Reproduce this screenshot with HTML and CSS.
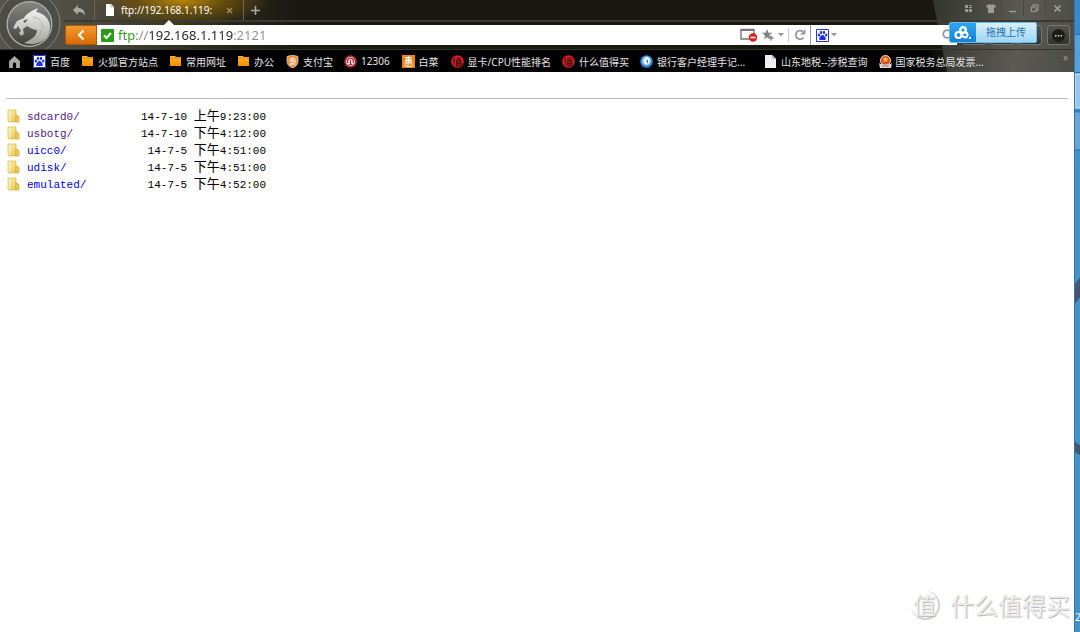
FILE: index.html
```html
<!DOCTYPE html>
<html lang="zh-CN">
<head>
<meta charset="utf-8">
<title>ftp://192.168.1.119:2121</title>
<link rel="stylesheet" href="styles.css">
</head>
<body>
<svg class="defs" width="0" height="0" aria-hidden="true">
  <defs>
    <linearGradient id="gFolder" x1="0" y1="0" x2="0" y2="1"><stop offset="0" stop-color="#ffb52e"/><stop offset="1" stop-color="#f28c00"/></linearGradient>
    <linearGradient id="gDir" x1="0" y1="0" x2="1" y2="1"><stop offset="0" stop-color="#fdf3b4"/><stop offset="1" stop-color="#e9c54e"/></linearGradient>
    <linearGradient id="gDisc" x1="0" y1="0" x2="0" y2="1"><stop offset="0" stop-color="#858581"/><stop offset=".5" stop-color="#62625e"/><stop offset="1" stop-color="#40403d"/></linearGradient>
    <linearGradient id="gHorse" x1="0" y1="0" x2="0" y2="1"><stop offset="0" stop-color="#f4f4f4"/><stop offset="1" stop-color="#a3a3a0"/></linearGradient>
    <symbol id="folder" viewBox="0 0 13 13"><path d="M1 1h5l1 1h5v9H1z" fill="url(#gFolder)"/><path d="M1 3h11" stroke="#b86e00" stroke-width=".6"/></symbol>
    <symbol id="paw" viewBox="0 0 13 13"><rect width="13" height="13" fill="#fff"/><path d="M.5.5h12v12H.5z" fill="none" stroke="#2a35e0"/><g fill="#2230dd"><ellipse cx="2.9" cy="6" rx="1.2" ry="1.6"/><ellipse cx="5" cy="3.4" rx="1.2" ry="1.6"/><ellipse cx="8" cy="3.4" rx="1.2" ry="1.6"/><ellipse cx="10.2" cy="6" rx="1.2" ry="1.6"/><path d="M6.500 5.800c1.300 0 1.700 1.300 2.600 2.100 1.300 1.200 1 3.200-.6 3.200-.8 0-1.200-.2-2-.2s-1.200.2-2 .2c-1.600 0-1.900-2-.6-3.200.9-.8 1.300-2.100 2.600-2.100z"/></g></symbol>
    <symbol id="smzdm" viewBox="0 0 13 13"><circle cx="6.500" cy="6.500" r="6.300" fill="#cf2029"/><path d="M4 2.500L2.300 6M3.300 5v5.500M5 3.800h5.500M7.800 2v2.500M5.500 5.500h4.500v4.500H5.500zM5.500 7h4.500M5.500 8.500h4.500M4.800 11h6" stroke="#43090c" stroke-width=".9" fill="none"/></symbol>
    <symbol id="dir" viewBox="0 0 13 14"><path d="M1 1h8v12H2l-1-1z" fill="url(#gDir)" stroke="#d9b84c" stroke-width=".7"/><path d="M9 6l3 1.500V13H9z" fill="#f1cf5d" stroke="#c9a238" stroke-width=".7"/><path d="M2.500 2v10" stroke="#fffbe0"/></symbol>
  </defs>
</svg>
<div class="screen">
  <div class="browser">
    <header class="chrome">
      <div class="top">
        <svg class="logo" viewBox="0 0 64 49" aria-label="浏览器菜单" role="img">
          <circle cx="29" cy="23" r="31" fill="#4d4c45" stroke="#85847b" stroke-width="1"/>
          <circle cx="29.500" cy="24" r="22.300" fill="url(#gDisc)" stroke="#b0b0ab" stroke-width="1.300"/>
          <path d="M14 26l3-5 7-3c2-4 7-7 14-10l-2 4c8 1 14 7 14 15 0 9-6 15-16 17-4 0-7 0-10-1 7-3 13-7 13-13-3 0-7-2-10-4l-4 3 1 5-3 2-2-3 2-2-3-5-2 3-3-1z" fill="url(#gHorse)"/>
          <path d="M23 21l5-2-3 4z" fill="#555552"/>
          <path d="M33 17c6 1 10 5 10 11M41 30c0 5-3 8-8 11" fill="none" stroke="#a0a09d" stroke-width=".7"/>
        </svg>
        <div class="tabs">
          <button class="undo" aria-label="恢复标签"><svg width="13" height="11" viewBox="0 0 13 11"><path d="M5 0v3c4 0 7 2 7 8-1-3-3-4-7-4v3L0 5z" fill="#aaa99f"/></svg></button>
          <div class="tab">
            <svg width="10" height="12" viewBox="0 0 10 12"><path d="M1 0h5l3 3v9H1z" fill="#fff"/><path d="M6 0v3h3" fill="none" stroke="#aaa" stroke-width=".8"/></svg>
            <span class="tab-title">ftp://192.168.1.119:</span>
            <button class="close" aria-label="关闭标签"><svg width="7" height="7" viewBox="0 0 7 7"><path d="M1 1l5 5M6 1L1 6" stroke="#a39261" stroke-width="1.400"/></svg></button>
          </div>
          <button class="new" aria-label="新标签"><svg width="9" height="9" viewBox="0 0 9 9"><path d="M4.500 0v9M0 4.500h9" stroke="#aaa99f" stroke-width="1.600"/></svg></button>
          <div class="controls">
            <button aria-label="布局"><svg width="9" height="9" viewBox="0 0 9 9"><path d="M1 1h3v3H1zM5 1h3v1H5zM5 3h3v1H5zM1 5h3v3H1zM5 5h3v3H5z" fill="#9b9b95"/></svg></button>
            <button aria-label="皮肤"><svg width="10" height="9" viewBox="0 0 10 9"><path d="M3 0c1 1 3 1 4 0l3 2-1 2-1-.5V9H2V3.500L1 4 0 2z" fill="#9b9b95"/></svg></button>
            <button aria-label="最小化"><svg width="9" height="9" viewBox="0 0 9 9"><path d="M1 7.500h7" stroke="#9b9b95" stroke-width="1.500"/></svg></button>
            <button aria-label="还原"><svg width="9" height="9" viewBox="0 0 9 9"><path d="M3 2.500V1h5v5H6.500M1.500 3h4.500v4.500H1.500z" fill="none" stroke="#9b9b95" stroke-width="1.100"/></svg></button>
            <button aria-label="关闭"><svg width="9" height="9" viewBox="0 0 9 9"><path d="M1.500 1.500l6 6M7.500 1.500l-6 6" stroke="#a5a59f" stroke-width="1.500"/></svg></button>
          </div>
        </div>
        <div class="nav">
          <button class="back" aria-label="后退"><svg width="8" height="12" viewBox="0 0 8 12"><path d="M6.500 1.500L2 6l4.500 4.500" fill="none" stroke="#fff" stroke-width="2"/></svg></button>
          <div class="address">
            <svg class="safe" width="13" height="13" viewBox="0 0 13 13"><rect width="13" height="13" rx="1" fill="#2d9a1c"/><path d="M3 6.500l2.500 2.500L10 4" fill="none" stroke="#fff" stroke-width="2"/></svg>
            <input class="url" type="text" aria-label="地址" value="ftp://192.168.1.119:2121">
            <svg width="18" height="14" viewBox="0 0 18 14"><path d="M1 1.500h13v9.500H1z" fill="#fff" stroke="#777" stroke-width="1.400"/><path d="M1 2h13" stroke="#777" stroke-width="2"/><circle cx="13" cy="9.500" r="4.200" fill="#e01b1b"/><path d="M10.500 9.500h5" stroke="#fff" stroke-width="1.600"/></svg>
            <svg width="12" height="12" viewBox="0 0 12 12"><path d="M5 0l1.400 3.800h4L7.300 6 8 8 6 9.500 5 8 2 10.500l1-4L0 3.800h3.700z" fill="#808080"/><path d="M9 6.500v5M6.500 9h5" stroke="#808080" stroke-width="1.400"/></svg>
            <svg width="6" height="4" viewBox="0 0 6 4"><path d="M0 0h6L3 3.500z" fill="#999"/></svg>
            <button class="reload" aria-label="刷新"><svg width="12" height="12" viewBox="0 0 12 12"><path d="M9.500 8.500A4.300 4.300 0 1 1 9 2.800" fill="none" stroke="#999" stroke-width="1.800"/><path d="M11.500 0v5.500H6z" fill="#999"/></svg></button>
          </div>
          <div class="search">
            <svg width="13" height="13"><use href="#paw"/></svg>
            <svg width="6" height="4" viewBox="0 0 6 4"><path d="M0 0h6L3 3.500z" fill="#999"/></svg>
            <input type="text" aria-label="搜索">
            <svg width="12" height="12" viewBox="0 0 12 12"><circle cx="5" cy="5" r="3.800" fill="none" stroke="#999" stroke-width="1.800"/><path d="M8 8l3.500 3.500" stroke="#999" stroke-width="2"/></svg>
          </div>
          <div class="tools"><span></span><span></span><span></span><button aria-label="更多"><svg width="13" height="13" viewBox="0 0 13 13"><circle cx="6.500" cy="6.500" r="6.500" fill="#1b1b19"/><path d="M3 6h1.500v1.500H3zM5.800 6h1.500v1.500H5.800zM8.600 6h1.500v1.500H8.600z" fill="#ddd"/></svg></button></div>
        </div>
      </div>
      <nav class="bookmarks">
        <a class="home" href="#" aria-label="主页"><svg width="12" height="12" viewBox="0 0 12 12"><path d="M6 1l5 4.500V12H7.500V8.500c0-2-3-2-3 0V12H1V5.500z" fill="#a8a8a5"/></svg></a>
        <a href="#"><svg><use href="#paw"/></svg>百度</a>
        <a href="#"><svg><use href="#folder"/></svg>火狐官方站点</a>
        <a href="#"><svg><use href="#folder"/></svg>常用网址</a>
        <a class="roomy" href="#"><svg><use href="#folder"/></svg>办公</a>
        <a href="#"><svg viewBox="0 0 13 13"><path d="M1 1.500L6.500 0 12 1.500v5c0 3-2 5-5.500 6.500C3 11.500 1 9.500 1 6.500z" fill="#f08a35" stroke="#ddd" stroke-width=".7"/><path d="M3.500 4h6M6.500 2.500V6M3.500 6h6c-1 2.500-3 4-5 4-2-2 2-3 5 0" fill="none" stroke="#fff" stroke-width="1"/></svg>支付宝</a>
        <a class="roomy" href="#"><svg viewBox="0 0 13 13"><circle cx="6.500" cy="6.500" r="5.300" fill="#fff" stroke="#a8323a" stroke-width="1.800"/><path d="M4 8a3 3 0 1 1 5 0M6.500 5v4M4.500 9.500h4" fill="none" stroke="#a8323a" stroke-width="1.400"/></svg>12306</a>
        <a class="roomy" href="#"><svg viewBox="0 0 13 13"><rect width="13" height="13" fill="#f08218"/><path d="M3 2.500h7M6.500 1v6.500M4 4h5v3H4zM4 5.500h5M2.500 8h8M3 9.500v2M5 9.500v2h4v-1M6.500 9v1M10 9.500l1 1.500" fill="none" stroke="#fff" stroke-width="1"/></svg>白菜</a>
        <a href="#"><svg><use href="#smzdm"/></svg>显卡/CPU性能排名</a>
        <a href="#"><svg><use href="#smzdm"/></svg>什么值得买</a>
        <a class="wide" href="#"><svg viewBox="0 0 13 13"><circle cx="6.500" cy="6.500" r="6.300" fill="#2f86d6"/><circle cx="6.500" cy="6" r="4.400" fill="#a9d6f7"/><path d="M7 1.500l3 3-2 5-3-1-1-3z" fill="#fff"/><path d="M6 6l2-2v5z" fill="#2f86d6"/></svg>银行客户经理手记...</a>
        <a href="#"><svg viewBox="0 0 13 13"><path d="M1 0h7l4 4v9H1z" fill="#eee"/><path d="M8 0v4h4" fill="#bbb"/></svg>山东地税--涉税查询</a>
        <a href="#"><svg viewBox="0 0 13 13"><circle cx="6.500" cy="5.500" r="5" fill="#d94a28" stroke="#eee0c8"/><path d="M6.500 1.500l1 2h2L8 5l.5 2-2-1-2 1L5 5 3.500 3.500h2z" fill="#ffc62e"/><path d="M0 8c3 2 10 2 13 0l-1 5H1z" fill="#d8d8d8"/><path d="M3 11h7" stroke="#a77"/></svg>国家税务总局发票...</a>
        <button class="more" aria-label="更多书签">»</button>
      </nav>
      <button class="upload"><span class="cloud"><svg width="18" height="14" viewBox="0 0 18 14"><g fill="none" stroke="#fff" stroke-width="2.200"><circle cx="9" cy="4" r="2.800"/><circle cx="4.500" cy="9" r="3"/><path d="M7 7.500c2 4 4 4.500 5.500 3.500s1.500-4-1-5"/></g><path d="M15 11h2v2h-2z" fill="#fff"/></svg></span><span class="label">拖拽上传</span></button>
    </header>
    <main class="page">
      <hr>
      <table class="files">
        <tbody>
          <tr><td><svg width="13" height="14"><use href="#dir"/></svg></td><td><a class="visited" href="#">sdcard0/</a></td><td>14-7-10 <span>上午</span>9:23:00</td></tr>
          <tr><td><svg width="13" height="14"><use href="#dir"/></svg></td><td><a class="visited" href="#">usbotg/</a></td><td>14-7-10 <span>下午</span>4:12:00</td></tr>
          <tr><td><svg width="13" height="14"><use href="#dir"/></svg></td><td><a href="#">uicc0/</a></td><td>14-7-5 <span>下午</span>4:51:00</td></tr>
          <tr><td><svg width="13" height="14"><use href="#dir"/></svg></td><td><a href="#">udisk/</a></td><td>14-7-5 <span>下午</span>4:51:00</td></tr>
          <tr><td><svg width="13" height="14"><use href="#dir"/></svg></td><td><a href="#">emulated/</a></td><td>14-7-5 <span>下午</span>4:52:00</td></tr>
        </tbody>
      </table>
      <div class="watermark"><span class="seal">值</span><span>什么值得买</span></div>
    </main>
  </div>
  <aside class="desktop">
    <svg class="wall" viewBox="0 0 6 632" preserveAspectRatio="none">
      <path d="M0 0h6v34H0z" fill="#3c87c9"/><path d="M0 34h6v38H0z" fill="#5b9fd8"/><path d="M0 74h6v34H0z" fill="#9cc4e4" stroke="#d8eaf6"/><path d="M0 113h6v37H0z" fill="#6ba5d1"/><path d="M0 34.500h6M0 72.500h6M0 111h6M0 150h6" stroke="#2a6ba5"/>
      <path d="M0 266l6-8v18l-6 7zM0 410l6 4v9l-6-4z" transform="translate(0 32)" fill="none"/>
      <path d="M0 284l6-8v20l-6 8zM0 442l6 4v10l-6-4z" fill="#4b566c"/>
    </svg>
    <span class="digit">2</span>
  </aside>
</div>
</body>
</html>
```
FILE: styles.css
```css
* { box-sizing: border-box; }

body {
  margin: 0;
  font-family: "Noto Sans", "Noto Sans CJK SC", sans-serif;
  font-size: 10px;
  color: #000;
}

.defs { position: absolute; }
svg { display: block; flex: none; }

button {
  display: flex;
  align-items: center;
  justify-content: center;
  padding: 0;
  border: 0;
  background: none;
  font: inherit;
  color: inherit;
}

input {
  flex: 1;
  min-width: 0;
  padding: 0;
  border: 0;
  outline: 0;
  background: none;
  font: inherit;
}

.screen { display: flex; min-height: 100vh; }
.browser { flex: 1; min-width: 0; display: flex; flex-direction: column; }

.chrome {
  position: relative;
  z-index: 0;
  background: #191912;
}

.chrome::before {
  content: "";
  position: absolute;
  z-index: -1;
  top: 0;
  right: 0;
  bottom: 0;
  width: 141px;
  background: linear-gradient(100deg, #35352f, #5b5b54 60%, #4c4c46);
  clip-path: polygon(0 0, 100% 0, 100% 100%, 14px 100%);
}

.top {
  display: grid;
  grid-template-columns: 64px 1fr;
  grid-template-rows: 22px 27px;
  background:
    radial-gradient(ellipse 90px 26px at 182px 0, #b8860a 0, rgba(120, 88, 8, 0.7) 50%, transparent 100%),
    linear-gradient(90deg, #55544c 0, #504e44 80px, rgba(60, 55, 35, 0.8) 180px, transparent 300px);
}

.logo { grid-row: 1 / 3; width: 64px; height: 49px; overflow: hidden; }

.tabs {
  display: flex;
  border-bottom: 2px solid #3b3b33;
}

.undo { width: 31px; border-right: 1px solid #6b6655; }

.tab {
  position: relative;
  display: flex;
  align-items: center;
  width: 148px;
  padding: 0 10px;
  gap: 6px;
  color: #fff;
}

.tab::after {
  content: "";
  position: absolute;
  top: 20px;
  left: 68px;
  border: 6px solid transparent;
  border-top: 0;
  border-bottom-color: #fff;
}

.tab-title { flex: 1; white-space: nowrap; }
.new { width: 24px; border-left: 1px solid #6b6655; }
.controls { display: flex; margin-left: auto; padding-right: 5px; height: 16px; }
.controls button { width: 22px; border-right: 1px solid #4a4a44; }
.controls button:last-child { width: 23px; border: 0; }

.nav { display: flex; padding: 3px 4px 4px 1px; }

.back {
  width: 32px;
  border: 1px solid #a95a08;
  border-radius: 2px 0 0 2px;
  background: linear-gradient(#f39a2b, #d96a06);
}

.address, .search {
  display: flex;
  align-items: center;
  background: #fff;
}

.address { flex: 1; padding-left: 4px; gap: 4px; }

.url {
  height: 20px;
  font-size: 13px;
  color: transparent;
  background: linear-gradient(90deg, #2a9a1c 19px, #8a8a8a 19px 31px, #222 31px 115px, #8a8a8a 115px);
  background-clip: text;
  -webkit-background-clip: text;
}

.reload { height: 14px; padding: 0 4px 0 5px; border-left: 1px solid #ccc; }
.search { width: 147px; padding: 0 3px 0 5px; gap: 2px; border-left: 1px solid #999; }
.tools { display: flex; gap: 5px; padding-left: 6px; }

.tools > * {
  width: 23px;
  border: 1px solid #77776f;
  border-radius: 3px;
  background: linear-gradient(#55554f, #33332e);
}

.bookmarks {
  display: flex;
  align-items: center;
  gap: 11px;
  height: 23px;
  padding: 0 6px 0 8px;
  border-top: 1px solid #34342e;
  background: linear-gradient(90deg, #000 86%, transparent 88%);
  color: #e4e4e4;
}

.bookmarks a {
  display: flex;
  align-items: center;
  gap: 4px;
  color: inherit;
  text-decoration: none;
  white-space: nowrap;
}

.bookmarks a svg { width: 13px; height: 13px; }
.bookmarks .home { padding-right: 1px; }
.bookmarks .roomy { padding-right: 1px; }
.bookmarks .wide { padding-right: 8px; }
.more { margin-left: auto; align-self: flex-start; color: #999; }

.upload {
  position: absolute;
  top: 22px;
  right: 37px;
  height: 21px;
  align-items: stretch;
  border: 1px solid #6bbcf0;
  border-radius: 2px;
  overflow: hidden;
  background: linear-gradient(#d8f0fd, #9dd6f7);
  color: #2c6fa8;
}

.cloud { display: flex; align-items: center; padding: 0 4px; background: linear-gradient(#2fa5ee, #1183d6); }
.label { padding: 0 10px; line-height: 19px; }

.page {
  position: relative;
  flex: 1;
  padding: 26px 6px 0;
  background: #fff;
}

hr { margin: 0; border: 0; border-top: 1px solid #bbb; }

.files {
  margin-top: 10px;
  border-collapse: collapse;
  font-family: "Liberation Mono", "Noto Sans CJK SC", monospace;
  font-size: 11px;
  line-height: 16px;
}

.files td { height: 17px; padding: 0; white-space: pre; vertical-align: top; }
.files td:first-child { width: 21px; padding-left: 1px; }
.files td:nth-child(2) { width: 114px; }
.files td:nth-child(3) { text-align: right; }
.files td span { font-size: 13px; line-height: 14px; }
.files a { color: #00e; text-decoration: none; }
.files .visited { color: #551a8b; }

.watermark {
  position: absolute;
  right: 4px;
  bottom: 10px;
  display: flex;
  align-items: center;
  gap: 10px;
  font-family: "Noto Sans CJK SC", sans-serif;
  font-size: 24px;
  line-height: 34px;
  color: #ececec;
  text-shadow: 1px 1px 1px #b4b4b4;
}

.seal {
  width: 29px;
  height: 29px;
  border-radius: 50%;
  border-right: 2px solid #d0d0d0;
  border-bottom: 2px solid #d0d0d0;
  font-size: 23px;
  line-height: 27px;
  text-align: center;
}

.desktop {
  position: relative;
  width: 6px;
  border-left: 1px solid #2f78ac;
  background: #4493c8;
  overflow: hidden;
}

.wall { position: absolute; top: 0; left: 0; width: 6px; height: 632px; }
.digit { position: absolute; left: 0; bottom: 8px; color: #fff; }
```
